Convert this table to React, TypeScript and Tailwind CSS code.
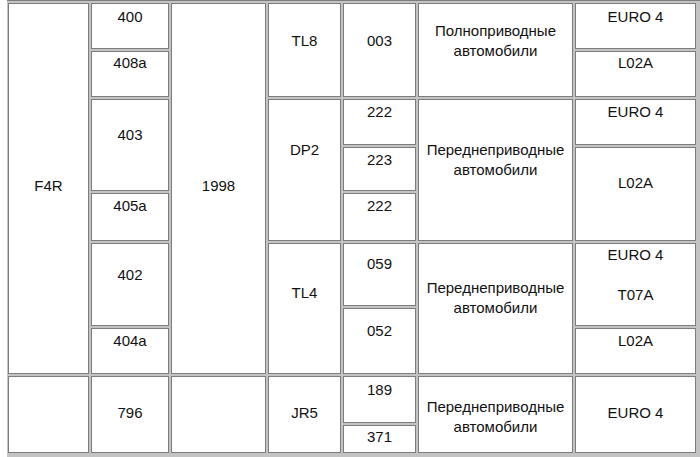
import React from 'react';

type Cell = {
  lines: string[];
  place: string;
  pad?: string;
};

const cells: Cell[] = [
  // engine
  { lines: ['F4R'], place: 'col-start-1 row-start-1 row-span-8', pad: 'pb-[5px]' },
  { lines: [], place: 'col-start-1 row-start-9 row-span-2' },
  // index
  { lines: ['400'], place: 'col-start-2 row-start-1', pad: 'pb-[18px]' },
  { lines: ['408a'], place: 'col-start-2 row-start-2', pad: 'pb-[22px]' },
  { lines: ['403'], place: 'col-start-2 row-start-3 row-span-2', pad: 'pb-[20px]' },
  { lines: ['405a'], place: 'col-start-2 row-start-5', pad: 'pb-[22px]' },
  { lines: ['402'], place: 'col-start-2 row-start-6 row-span-2', pad: 'pb-[19px]' },
  { lines: ['404a'], place: 'col-start-2 row-start-8', pad: 'pb-[20px]' },
  { lines: ['796'], place: 'col-start-2 row-start-9 row-span-2', pad: 'pb-[3px]' },
  // year
  { lines: ['1998'], place: 'col-start-3 row-start-1 row-span-8', pad: 'pb-[5px]' },
  { lines: [], place: 'col-start-3 row-start-9 row-span-2' },
  // gearbox
  { lines: ['TL8'], place: 'col-start-4 row-start-1 row-span-2', pad: 'pb-[18px]' },
  { lines: ['DP2'], place: 'col-start-4 row-start-3 row-span-3', pad: 'pb-[40px]' },
  { lines: ['TL4'], place: 'col-start-4 row-start-6 row-span-3', pad: 'pb-[31px]' },
  { lines: ['JR5'], place: 'col-start-4 row-start-9 row-span-2', pad: 'pb-[3px]' },
  // gearbox index
  { lines: ['003'], place: 'col-start-5 row-start-1 row-span-2', pad: 'pb-[18px]' },
  { lines: ['222'], place: 'col-start-5 row-start-3', pad: 'pb-[20px]' },
  { lines: ['223'], place: 'col-start-5 row-start-4', pad: 'pb-[18px]' },
  { lines: ['222'], place: 'col-start-5 row-start-5', pad: 'pb-[22px]' },
  { lines: ['059'], place: 'col-start-5 row-start-6', pad: 'pb-[21px]' },
  { lines: ['052'], place: 'col-start-5 row-start-7 row-span-2', pad: 'pb-[20px]' },
  { lines: ['189'], place: 'col-start-5 row-start-9', pad: 'pb-[19px]' },
  { lines: ['371'], place: 'col-start-5 row-start-10', pad: 'pb-[4px]' },
  // drive
  { lines: ['Полноприводные', 'автомобили'], place: 'col-start-6 row-start-1 row-span-2', pad: 'pb-[18px]' },
  { lines: ['Переднеприводные', 'автомобили'], place: 'col-start-6 row-start-3 row-span-3', pad: 'pb-[20px]' },
  { lines: ['Переднеприводные', 'автомобили'], place: 'col-start-6 row-start-6 row-span-3', pad: 'pb-[21px]' },
  { lines: ['Переднеприводные', 'автомобили'], place: 'col-start-6 row-start-9 row-span-2', pad: 'pt-[4px]' },
  // norm
  { lines: ['EURO 4'], place: 'col-start-7 row-start-1', pad: 'pb-[18px]' },
  { lines: ['L02A'], place: 'col-start-7 row-start-2', pad: 'pb-[22px]' },
  { lines: ['EURO 4'], place: 'col-start-7 row-start-3', pad: 'pb-[20px]' },
  { lines: ['L02A'], place: 'col-start-7 row-start-4 row-span-2', pad: 'pb-[22px]' },
  { lines: ['EURO 4', '\u00a0', 'T07A'], place: 'col-start-7 row-start-6 row-span-2', pad: 'pb-[19px]' },
  { lines: ['L02A'], place: 'col-start-7 row-start-8', pad: 'pb-[20px]' },
  { lines: ['EURO 4'], place: 'col-start-7 row-start-9 row-span-2', pad: 'pb-[3px]' },
];

const App = () => {
  return (
    <div className="w-[700px] h-[457px] bg-white overflow-hidden font-['Liberation_Sans',Arial,sans-serif] text-[15px] leading-[20px] text-[#111]">
      <div className="ml-[7px] bg-[#c3c3c3] border-t border-[#7d7d7d] pt-[2px] pl-[1px] pr-[4px] pb-[4px]">
        <div className="grid grid-cols-[81px_78px_95px_73px_73px_155px_121px] grid-rows-[46px_46px_46px_44px_48px_63px_18px_46px_47px_28px] gap-[2px]">
          {cells.map((cell, i) => (
            <div
              key={i}
              className={`${cell.place} ${cell.pad ?? ''} bg-white border border-[#7d7d7d] flex flex-col items-center justify-center text-center`}
            >
              {cell.lines.map((line, j) => (
                <span key={j} className="whitespace-nowrap">{line}</span>
              ))}
            </div>
          ))}
        </div>
      </div>
    </div>
  );
};

export default App;
